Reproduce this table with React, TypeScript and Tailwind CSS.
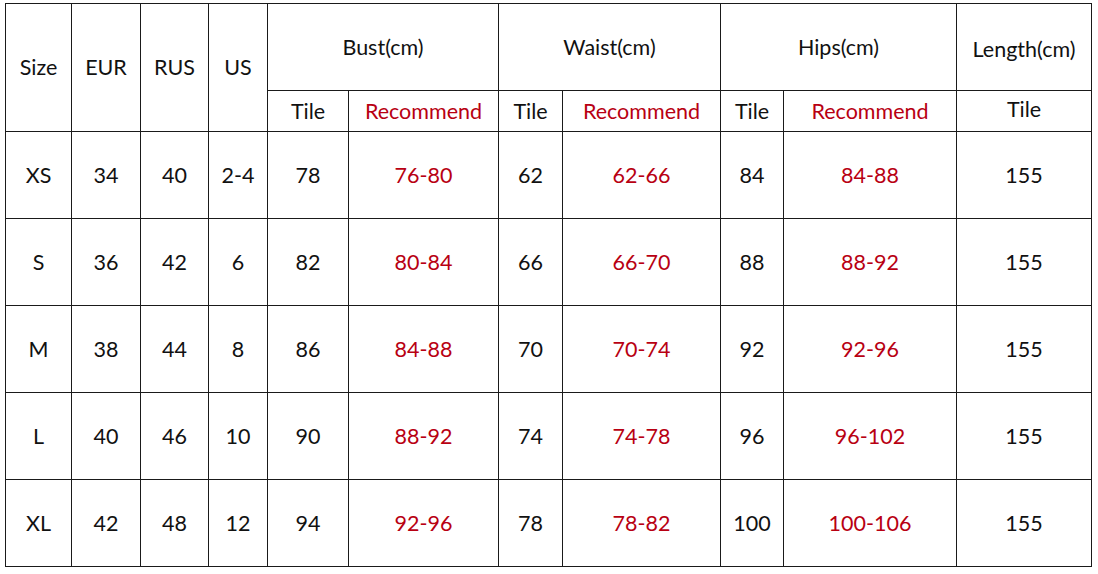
import React from "react";

const rows = [
  ["XS", "34", "40", "2-4", "78", "76-80", "62", "62-66", "84", "84-88", "155"],
  ["S", "36", "42", "6", "82", "80-84", "66", "66-70", "88", "88-92", "155"],
  ["M", "38", "44", "8", "86", "84-88", "70", "70-74", "92", "92-96", "155"],
  ["L", "40", "46", "10", "90", "88-92", "74", "74-78", "96", "96-102", "155"],
  ["XL", "42", "48", "12", "94", "92-96", "78", "78-82", "100", "100-106", "155"],
];

const widths = [66, 69, 68, 59, 81, 150, 64, 158, 63, 173, 135];
const red = new Set([5, 7, 9]);

export default function App() {
  const cell = "border border-[#1a1a1a] text-center align-middle p-0";
  return (
    <div
      className="w-[1098px] h-[574px] bg-white pt-[3px] pl-[5px] text-[#111] text-[21.5px]"
      style={{ fontFamily: "Lato, 'Open Sans', sans-serif" }}
    >
      <table className="border-collapse table-fixed w-[1086px]">
        <colgroup>
          {widths.map((w, i) => (
            <col key={i} style={{ width: w }} />
          ))}
        </colgroup>
        <thead>
          <tr className="h-[87px]">
            <th rowSpan={2} className={`${cell} font-normal`}>Size</th>
            <th rowSpan={2} className={`${cell} font-normal`}>EUR</th>
            <th rowSpan={2} className={`${cell} font-normal`}>RUS</th>
            <th rowSpan={2} className={`${cell} font-normal`}>US</th>
            <th colSpan={2} className={`${cell} font-normal`}>Bust(cm)</th>
            <th colSpan={2} className={`${cell} font-normal`}>Waist(cm)</th>
            <th colSpan={2} className={`${cell} font-normal`}>Hips(cm)</th>
            <th className={`${cell} font-normal pt-[4px]`}>Length(cm)</th>
          </tr>
          <tr className="h-[41px]">
            <th className={`${cell} font-normal`}>Tile</th>
            <th className={`${cell} font-normal text-[#b80012]`}>Recommend</th>
            <th className={`${cell} font-normal`}>Tile</th>
            <th className={`${cell} font-normal text-[#b80012]`}>Recommend</th>
            <th className={`${cell} font-normal`}>Tile</th>
            <th className={`${cell} font-normal text-[#b80012]`}>Recommend</th>
            <th className={`${cell} font-normal pb-[3px]`}>Tile</th>
          </tr>
        </thead>
        <tbody>
          {rows.map((r, ri) => (
            <tr key={ri} className="h-[87px]">
              {r.map((v, ci) => (
                <td
                  key={ci}
                  className={`${cell} ${red.has(ci) ? "text-[#b80012]" : ""}`}
                >
                  {v}
                </td>
              ))}
            </tr>
          ))}
        </tbody>
      </table>
    </div>
  );
}
